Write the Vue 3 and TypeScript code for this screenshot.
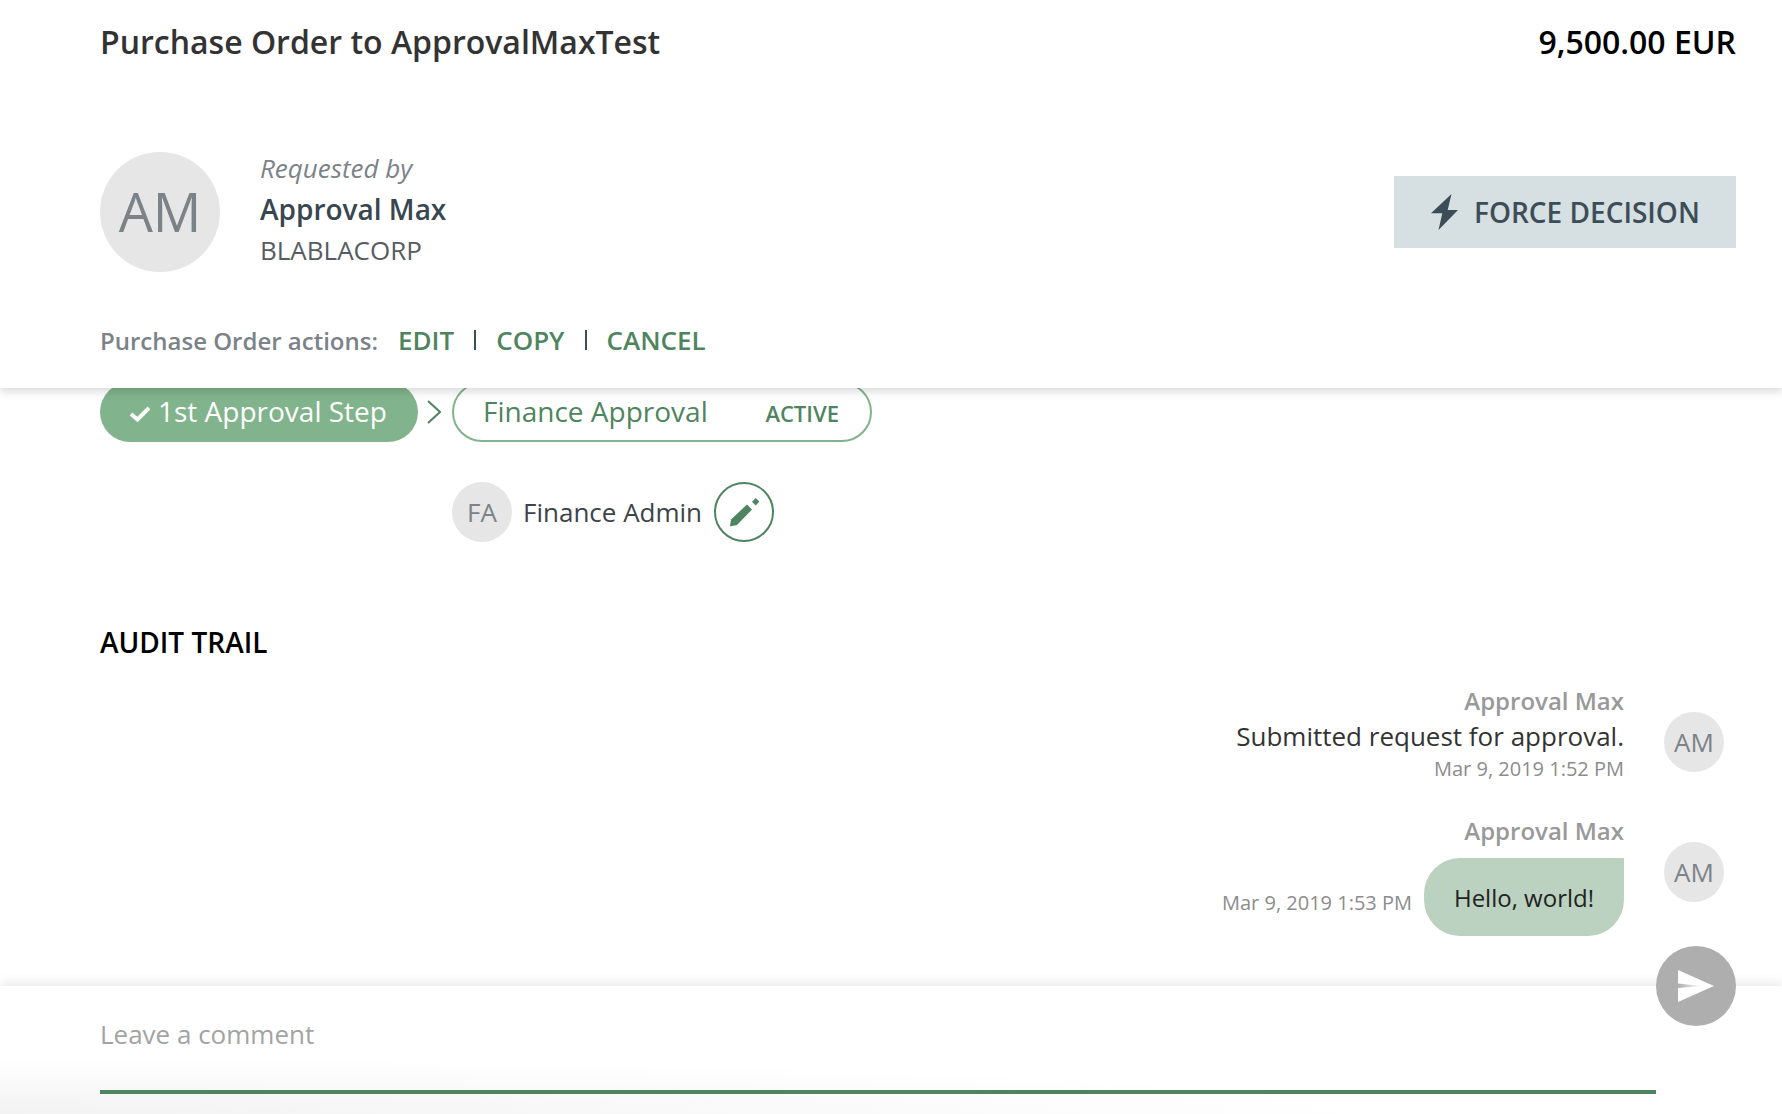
<template>
  <div class="page">
    <header class="summary">
      <div class="title-row">
        <h1 class="title">Purchase Order to ApprovalMaxTest</h1>
        <div class="amount">9,500.00 EUR</div>
      </div>
      <div class="requester-row">
        <div class="avatar avatar-large">AM</div>
        <div class="requester">
          <div class="requested-by">Requested by</div>
          <div class="requester-name">Approval Max</div>
          <div class="requester-company">BLABLACORP</div>
        </div>
        <button class="force-button">
          <svg class="bolt" viewBox="0 0 27 36" width="27" height="36">
            <path d="M20.5 0 L0 19.3 L11.3 19.3 L7.5 36 L27 16 L16.7 16 Z" fill="#3d4d58" />
          </svg>
          FORCE DECISION
        </button>
      </div>
      <div class="actions-row">
        <span class="actions-label">Purchase Order actions:</span>
        <template v-for="(action, i) in actions" :key="action">
          <span v-if="i > 0" class="actions-sep"></span>
          <a class="action-link">{{ action }}</a>
        </template>
      </div>
    </header>

    <main class="content">
      <div class="steps">
        <div class="step-done">
          <svg class="check" viewBox="0 0 20 16" width="20" height="16">
            <path d="M1 8 L7.5 13.5 L19 2" fill="none" stroke="#fff" stroke-width="4" />
          </svg>
          1st Approval Step
        </div>
        <svg class="chevron" viewBox="0 0 14 24" width="14" height="24">
          <path d="M1 1 L13 12 L1 23" fill="none" stroke="#4e8560" stroke-width="2" />
        </svg>
        <div class="step-active">
          <span>Finance Approval</span>
          <span class="step-status">ACTIVE</span>
        </div>
      </div>
      <div class="approver">
        <div class="avatar avatar-small">FA</div>
        <span class="approver-name">Finance Admin</span>
        <button class="edit-button">
          <svg viewBox="0 0 30 30" width="30" height="30">
            <path d="M1 29.5 L2 22.5 L18 7.5 L23 12.5 L8 28 Z" fill="#4e8560" />
            <path d="M26.7 1 L30.4 4.7 L26.7 8.4 L23 4.7 Z" fill="#4e8560" />
          </svg>
        </button>
      </div>

      <h2 class="audit-title">AUDIT TRAIL</h2>
      <div class="messages">
        <div v-for="msg in messages" :key="msg.time" class="message">
          <div class="message-body">
            <div class="message-author">{{ msg.author }}</div>
            <template v-if="msg.bubble">
              <div class="bubble-row">
                <span class="message-time bubble-time">{{ msg.time }}</span>
                <div class="bubble">{{ msg.text }}</div>
              </div>
            </template>
            <template v-else>
              <div class="message-text">{{ msg.text }}</div>
              <div class="message-time">{{ msg.time }}</div>
            </template>
          </div>
          <div class="avatar avatar-small message-avatar">AM</div>
        </div>
      </div>
    </main>

    <footer class="composer">
      <div class="comment-input">Leave a comment</div>
      <button class="send-button">
        <svg viewBox="0 0 36 32" width="36" height="32">
          <defs>
            <linearGradient id="send-fold" x1="0" y1="0" x2="1" y2="0">
              <stop offset="0" stop-color="#aeaeae" />
              <stop offset="1" stop-color="#fff" />
            </linearGradient>
          </defs>
          <path d="M0 0 L36 16 L0 32 Z" fill="#fff" />
          <path d="M0 13.5 L24 16 L0 18 Z" fill="url(#send-fold)" />
        </svg>
      </button>
    </footer>
  </div>
</template>

<script setup lang="ts">
interface AuditMessage {
  author: string
  text: string
  time: string
  bubble: boolean
}

const actions = ['EDIT', 'COPY', 'CANCEL']

const messages: AuditMessage[] = [
  { author: 'Approval Max', text: 'Submitted request for approval.', time: 'Mar 9, 2019 1:52 PM', bubble: false },
  { author: 'Approval Max', text: 'Hello, world!', time: 'Mar 9, 2019 1:53 PM', bubble: true },
]
</script>

<style scoped>
.page {
  height: 1114px;
  display: flex;
  flex-direction: column;
  overflow: hidden;
  background: #fff;
  font-family: "Open Sans", "Noto Sans", sans-serif;
  color: #333;
}

.summary {
  position: relative;
  z-index: 2;
  height: 388px;
  flex: none;
  box-sizing: border-box;
  padding: 0 46px 0 100px;
  background: #fff;
  box-shadow: 0 4px 8px rgba(0, 0, 0, 0.14);
}

.title-row {
  height: 83px;
  display: flex;
  align-items: center;
  justify-content: space-between;
}

.title {
  margin: 0;
  font-size: 32px;
  font-weight: 600;
  color: #333;
}

.amount {
  font-size: 32px;
  font-weight: 600;
  color: #000;
}

.requester-row {
  margin-top: 69px;
  height: 120px;
  display: flex;
  align-items: center;
}

.avatar {
  flex: none;
  display: flex;
  align-items: center;
  justify-content: center;
  border-radius: 50%;
  background: #e6e6e6;
  color: #7b8288;
}

.avatar-large {
  width: 120px;
  height: 120px;
  font-size: 54px;
  padding-bottom: 2px;
  box-sizing: border-box;
}

.avatar-small {
  width: 60px;
  height: 60px;
  font-size: 26px;
}

.requester {
  margin: -7px 0 0 40px;
  flex: 1;
}

.requested-by {
  font-size: 26px;
  font-style: italic;
  color: #7b8288;
  line-height: 40px;
}

.requester-name {
  font-size: 28px;
  font-weight: 600;
  color: #384650;
  line-height: 42px;
}

.requester-company {
  font-size: 26px;
  color: #565c61;
  line-height: 40px;
}

.force-button {
  width: 342px;
  height: 72px;
  display: flex;
  align-items: center;
  padding: 0 0 0 37px;
  gap: 16px;
  border: 0;
  background: #d6dfe1;
  font-family: inherit;
  font-size: 28px;
  font-weight: 600;
  color: #3d4d58;
}

.actions-row {
  margin-top: 48px;
  height: 40px;
  display: flex;
  align-items: center;
  font-size: 24px;
  font-weight: 600;
}

.actions-label {
  color: #7b8288;
  margin-right: 20px;
}

.action-link {
  color: #4e8560;
  font-size: 26px;
}

.actions-sep {
  width: 2px;
  height: 20px;
  margin: 0 20px;
  background: #3d4d58;
}

.content {
  flex: 1;
  min-height: 0;
  margin-top: -6px;
  padding: 0 46px 0 100px;
}

.steps {
  display: flex;
  align-items: center;
}

.step-done {
  box-sizing: border-box;
  width: 318px;
  height: 60px;
  display: flex;
  align-items: center;
  gap: 8px;
  padding: 0 0 2px 30px;
  border-radius: 30px;
  background: #81b48c;
  color: #fff;
  font-size: 28px;
}

.check {
  margin-top: 6px;
}

.chevron {
  margin: 0 11px 1px 9px;
}

.step-active {
  box-sizing: border-box;
  width: 420px;
  height: 60px;
  display: flex;
  align-items: center;
  justify-content: space-between;
  padding: 0 31px 2px 29px;
  border: 2px solid #81b48c;
  border-radius: 30px;
  color: #4e8560;
  font-size: 28px;
}

.step-status {
  margin-top: 4px;
  font-size: 22px;
  font-weight: 600;
}

.approver {
  margin: 40px 0 0 352px;
  display: flex;
  align-items: center;
}

.approver-name {
  margin: 0 12px 0 11px;
  font-size: 26px;
  color: #3c4349;
}

.edit-button {
  box-sizing: border-box;
  width: 60px;
  height: 60px;
  padding: 0;
  display: flex;
  align-items: center;
  justify-content: center;
  border: 2px solid #4e8560;
  border-radius: 50%;
  background: #fff;
}

.audit-title {
  margin: 80px 0 0;
  font-size: 28px;
  font-weight: 600;
  color: #000;
  line-height: 40px;
}

.messages {
  margin-top: 22px;
  display: flex;
  flex-direction: column;
  gap: 30px;
}

.message {
  display: flex;
  justify-content: flex-end;
  align-items: flex-start;
  gap: 40px;
  padding-right: 12px;
}

.message-avatar {
  margin-top: 28px;
}

.message-body {
  display: flex;
  flex-direction: column;
  align-items: flex-end;
}

.message-author {
  font-size: 24px;
  font-weight: 600;
  color: #999;
  line-height: 34px;
}

.message-text {
  font-size: 26px;
  color: #333;
  line-height: 36px;
}

.message-time {
  font-size: 20px;
  color: #8c8c8c;
  line-height: 30px;
}

.bubble-row {
  margin-top: 10px;
  display: flex;
  align-items: center;
  gap: 12px;
}

.bubble-time {
  padding-top: 12px;
}

.bubble {
  box-sizing: border-box;
  height: 78px;
  width: 200px;
  display: flex;
  align-items: center;
  justify-content: center;
  border-radius: 36px 0 36px 36px;
  background: #bad2bf;
  font-size: 24px;
  color: #222;
}

.composer {
  position: relative;
  z-index: 1;
  height: 128px;
  flex: none;
  box-sizing: border-box;
  padding: 0 126px 20px 100px;
  display: flex;
  background: radial-gradient(ellipse 1400px 56px at 0 100%, #f3f3f3, #fff);
  box-shadow: 0 -4px 10px rgba(0, 0, 0, 0.08);
}

.comment-input {
  flex: 1;
  border-bottom: 4px solid #4e8560;
  padding-top: 30px;
  font-size: 26px;
  color: #a3a3a3;
}

.send-button {
  position: absolute;
  right: 46px;
  top: -40px;
  width: 80px;
  height: 80px;
  padding: 0;
  display: flex;
  align-items: center;
  justify-content: center;
  border: 0;
  border-radius: 50%;
  background: #aeaeae;
}
</style>
